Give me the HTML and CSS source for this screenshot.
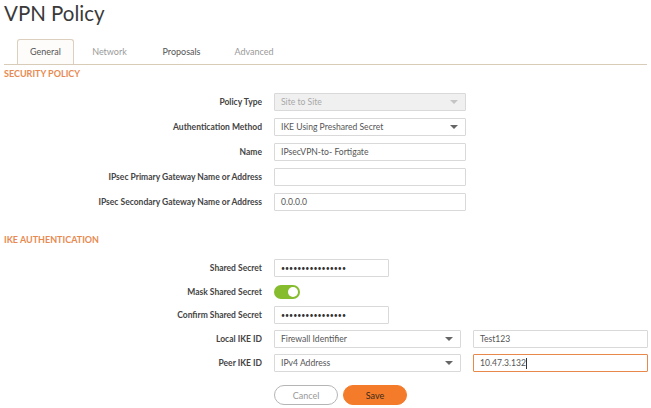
FILE: index.html
```html
<!DOCTYPE html>
<html>
<head>
<meta charset="utf-8">
<link rel="stylesheet" href="styles.css">
</head>
<body>
<div class="page">
  <h1 class="title">VPN Policy</h1>
  <div class="tabs">
    <div class="tab active">General</div>
    <div class="tab">Network</div>
    <div class="tab dark">Proposals</div>
    <div class="tab">Advanced</div>
  </div>
  <div class="section-head">SECURITY POLICY</div>
  <div class="form sp">
    <div class="row">
      <label class="lbl">Policy Type</label>
      <div class="field select disabled w-wide"><span>Site to Site</span><i class="caret"></i></div>
    </div>
    <div class="row">
      <label class="lbl">Authentication Method</label>
      <div class="field select w-wide"><span>IKE Using Preshared Secret</span><i class="caret"></i></div>
    </div>
    <div class="row">
      <label class="lbl">Name</label>
      <div class="field w-wide"><span>IPsecVPN-to- Fortigate</span></div>
    </div>
    <div class="row">
      <label class="lbl">IPsec Primary Gateway Name or Address</label>
      <div class="field w-wide"><span></span></div>
    </div>
    <div class="row">
      <label class="lbl">IPsec Secondary Gateway Name or Address</label>
      <div class="field w-wide"><span>0.0.0.0</span></div>
    </div>
  </div>
  <div class="section-head ike">IKE AUTHENTICATION</div>
  <div class="form ike-form">
    <div class="row">
      <label class="lbl">Shared Secret</label>
      <div class="field w-short"><span class="dots">••••••••••••••••</span></div>
    </div>
    <div class="row row-toggle">
      <label class="lbl">Mask Shared Secret</label>
      <div class="toggle"><i class="knob"></i></div>
    </div>
    <div class="row">
      <label class="lbl">Confirm Shared Secret</label>
      <div class="field w-short"><span class="dots">••••••••••••••••</span></div>
    </div>
    <div class="row">
      <label class="lbl">Local IKE ID</label>
      <div class="pair">
        <div class="field select w-sel"><span>Firewall Identifier</span><i class="caret"></i></div>
        <div class="field w-id"><span>Test123</span></div>
      </div>
    </div>
    <div class="row">
      <label class="lbl">Peer IKE ID</label>
      <div class="pair">
        <div class="field select w-sel"><span>IPv4 Address</span><i class="caret"></i></div>
        <div class="field w-id focus"><span>10.47.3.132</span><i class="cursor"></i></div>
      </div>
    </div>
    <div class="row row-buttons">
      <span class="lbl"></span>
      <div class="buttons">
        <button class="btn cancel">Cancel</button>
        <button class="btn save">Save</button>
      </div>
    </div>
  </div>
</div>
</body>
</html>
```

FILE: styles.css
```css
html, body {
  margin: 0;
  padding: 0;
  background: #ffffff;
}
body {
  font-family: Lato, "Open Sans", sans-serif;
  color: #333;
}
.page {
  width: 651px;
  height: 408px;
  overflow: hidden;
  padding: 0 4px;
  box-sizing: border-box;
}
.title {
  margin: 0;
  font-weight: 400;
  font-size: 20.5px;
  line-height: 26px;
  color: #3a3a3a;
  height: 39px;
}
.tabs {
  display: flex;
  border-bottom: 1px solid #d8cbb8;
  height: 25px;
  padding-left: 13px;
}
.tab {
  font-size: 9px;
  color: #9a9a9a;
  line-height: 25px;
  text-align: center;
}
.tab:nth-child(1) { width: 57px; }
.tab:nth-child(2) { width: 71px; }
.tab:nth-child(3) { width: 73px; }
.tab:nth-child(4) { width: 72px; }
.tab.dark { color: #555; }
.tab.active {
  color: #555;
  background: #fdfcfa;
  border: 1px solid #dccfbd;
  border-bottom: none;
  border-radius: 3px 3px 0 0;
  box-sizing: border-box;
  height: 25px;
  line-height: 23px;
}
.section-head {
  font-size: 9px;
  font-weight: 700;
  color: #e88a50;
  line-height: 14px;
  height: 14px;
  margin-top: 2px;
}
.section-head.ike {
  margin-top: 22px;
}
.form {
  display: flex;
  flex-direction: column;
}
.form.sp {
  margin-top: 12px;
  row-gap: 7px;
}
.ike-form {
  margin-top: 12px;
  row-gap: 6px;
}
.row {
  display: grid;
  grid-template-columns: 258px 1fr;
  column-gap: 12px;
  align-items: center;
}
.lbl {
  text-align: right;
  font-size: 8.5px;
  font-weight: 700;
  color: #444;
}
.field {
  height: 18px;
  box-sizing: border-box;
  border: 1px solid #d9d9d9;
  border-radius: 1px;
  background: #fff;
  display: flex;
  align-items: center;
  padding: 0 6px;
  font-size: 8.6px;
  color: #555;
  position: relative;
}
.field.select { justify-content: space-between; }
.field.disabled {
  background: #f0f0f0;
  color: #a8a8a8;
}
.w-wide { width: 192px; }
.w-short { width: 115px; }
.w-sel { width: 187px; }
.w-id { width: 175px; }
.caret {
  width: 0;
  height: 0;
  border-left: 4px solid transparent;
  border-right: 4px solid transparent;
  border-top: 4px solid #666;
  margin-right: 1px;
}
.disabled .caret { border-top-color: #c4c4c4; }
.dots {
  font-size: 7px;
  letter-spacing: 0;
  color: #333;
}
.pair {
  display: flex;
  column-gap: 12px;
}
.focus {
  border-color: #e8894b;
}
.cursor {
  display: inline-block;
  width: 1px;
  height: 11px;
  background: #333;
}
.field.focus { justify-content: flex-start; }
.row-toggle { height: 17px; }
.toggle {
  width: 26px;
  height: 14px;
  border-radius: 7px;
  background: #86bd2e;
  position: relative;
}
.knob {
  position: absolute;
  right: 2px;
  top: 2px;
  width: 10px;
  height: 10px;
  border-radius: 50%;
  background: #fff;
}
.row-buttons { margin-top: 7px; }
.buttons {
  display: flex;
  column-gap: 5px;
}
.btn {
  font-family: Lato, "Open Sans", sans-serif;
  font-size: 9px;
  height: 20px;
  width: 64px;
  border-radius: 10px;
  padding: 0;
  cursor: pointer;
}
.btn.cancel {
  background: #fff;
  border: 1px solid #b5b5b5;
  color: #999;
}
.btn.save {
  background: #f47b2a;
  border: 1px solid #f47b2a;
  color: #3a2a1a;
}
```
